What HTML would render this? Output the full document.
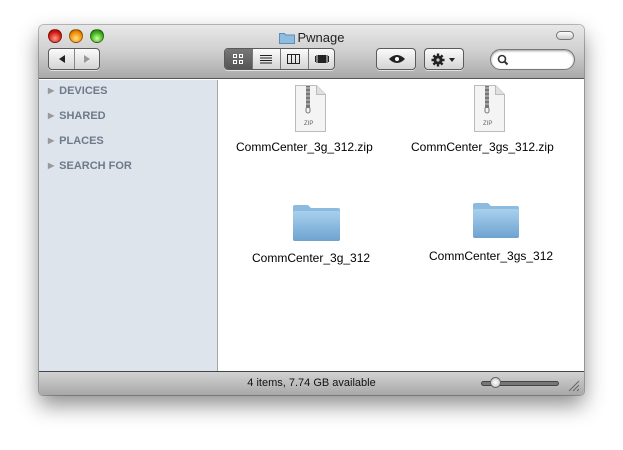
<!DOCTYPE html>
<html><head><style>
*{margin:0;padding:0;box-sizing:border-box}
body{width:623px;height:450px;background:#fff;position:relative;overflow:hidden;font-family:"Liberation Sans",sans-serif}
.win{position:absolute;left:39px;top:25px;width:545px;height:370px;border-radius:5px 5px 4px 4px;box-shadow:0 10px 22px rgba(0,0,0,.45),0 0 0 1px rgba(0,0,0,.25);overflow:hidden;background:#fff}
.tb{position:absolute;left:0;top:0;width:545px;height:54px;background:linear-gradient(#e8e8e8,#cfcfcf 50%,#a9a9a9);border-bottom:1px solid #555}
.light{position:absolute;top:4px;width:14px;height:14px;border-radius:50%;border:1px solid rgba(0,0,0,.35)}
.title{position:absolute;top:5px;left:0;width:545px;text-align:center;font-size:13px;color:#222}
.btn{position:absolute;top:23px;height:22px;border:1px solid #5a5a5a;border-radius:4px;background:linear-gradient(#fbfbfb,#d4d4d4);box-shadow:0 1px 0 rgba(255,255,255,.6)}
.side{position:absolute;left:0;top:55px;width:179px;height:291px;background:#dde4ec;border-right:1px solid #a5a5a5}
.side div{position:absolute;left:9px;font-size:11px;font-weight:bold;color:#6e7a89}
.side span{color:#999;font-size:8px;margin-right:5px;vertical-align:1px}
.bot{position:absolute;left:0;top:346px;width:545px;height:24px;background:linear-gradient(#d2d2d2,#a8a8a8);border-top:1px solid #444;font-size:11px;color:#111;text-align:center;line-height:22px}
.lbl{position:absolute;font-size:12px;color:#000;white-space:nowrap}
</style></head><body>
<div class="win">
 <div class="tb">
  <div class="light" style="left:9px;background:radial-gradient(circle at 50% 70%,#ff9a8a,#d21a10 60%,#8a0a05)"></div>
  <div class="light" style="left:30px;background:radial-gradient(circle at 50% 70%,#ffe08a,#f08b00 60%,#a05500)"></div>
  <div class="light" style="left:51px;background:radial-gradient(circle at 50% 70%,#cfffa0,#3aae1a 60%,#1e6a08)"></div>
  <div class="title"><svg width="16" height="13" style="vertical-align:-2px;margin-right:3px" viewBox="0 0 16 13"><path d="M0.5 2.5h5l1 1.5h9v8.5h-15z" fill="#8fbde0" stroke="#5a8fba"/></svg>Pwnage</div>
  <div style="position:absolute;right:10px;top:6px;width:18px;height:9px;border:1px solid #777;border-radius:5px;background:linear-gradient(#fff,#ccc)"></div>
  <div class="btn" style="left:9px;width:52px"><div style="position:absolute;left:25px;top:0;width:1px;height:20px;background:#888"></div>
   <svg style="position:absolute;left:8px;top:5px" width="10" height="10"><path d="M8 1L2 5 8 9z" fill="#222"/></svg>
   <svg style="position:absolute;left:33px;top:5px" width="10" height="10"><path d="M2 1L8 5 2 9z" fill="#999"/></svg></div>
  <div class="btn" style="left:185px;width:111px;overflow:hidden;background:linear-gradient(#fbfbfb,#d4d4d4)">
   <div style="position:absolute;left:0;top:0;width:27px;height:20px;background:linear-gradient(#777,#555)"></div>
   <svg style="position:absolute;left:8px;top:5px" width="10" height="10"><g fill="none" stroke="#fff"><rect x=".5" y=".5" width="3" height="3"/><rect x="6.5" y=".5" width="3" height="3"/><rect x=".5" y="6.5" width="3" height="3"/><rect x="6.5" y="6.5" width="3" height="3"/></g></svg>
   <div style="position:absolute;left:27px;top:0;width:1px;height:20px;background:#777"></div>
   <svg style="position:absolute;left:35px;top:5px" width="12" height="10"><path d="M0 1.5h12M0 4h12M0 6.5h12M0 9h12" stroke="#222"/></svg>
   <div style="position:absolute;left:55px;top:0;width:1px;height:20px;background:#777"></div>
   <svg style="position:absolute;left:62px;top:5px" width="14" height="10"><rect x=".5" y=".5" width="12" height="9" fill="none" stroke="#222"/><path d="M4.5 0v10M8.5 0v10" stroke="#222"/></svg>
   <div style="position:absolute;left:83px;top:0;width:1px;height:20px;background:#777"></div>
   <svg style="position:absolute;left:89px;top:5px" width="16" height="10"><rect x="4" y="1" width="8" height="8" fill="#222"/><path d="M1.5 2v6M14.5 2v6M3 1v8M13 1v8" stroke="#222"/></svg>
  </div>
  <div class="btn" style="left:337px;width:40px"><svg style="position:absolute;left:11px;top:5px" width="18" height="10"><path d="M1 5Q9 -3 17 5Q9 13 1 5z" fill="#222"/><circle cx="9" cy="5" r="2" fill="#fff"/></svg></div>
  <div class="btn" style="left:385px;width:40px"><svg style="position:absolute;left:6px;top:4px" width="26" height="14"><g fill="#222" transform="translate(7,7)"><circle r="4.5"/><g stroke="#222" stroke-width="2.4"><path d="M0-6.5V6.5M-6.5 0H6.5M-4.6-4.6L4.6 4.6M-4.6 4.6L4.6-4.6"/></g><circle r="1.6" fill="#ccc"/></g><path d="M18 5h6l-3 4z" fill="#222"/></svg></div>
  <div style="position:absolute;left:451px;top:24px;width:85px;height:21px;border-radius:11px;background:#fff;border:1px solid #777;box-shadow:inset 0 1px 2px rgba(0,0,0,.4)"><svg style="position:absolute;left:6px;top:4px" width="12" height="12"><circle cx="5" cy="5" r="3.5" fill="none" stroke="#333" stroke-width="1.6"/><path d="M7.5 7.5l3 3" stroke="#333" stroke-width="2"/></svg></div>
 </div>
 <div class="side">
  <div style="top:5px"><span>▶</span>DEVICES</div>
  <div style="top:30px"><span>▶</span>SHARED</div>
  <div style="top:55px"><span>▶</span>PLACES</div>
  <div style="top:80px"><span>▶</span>SEARCH FOR</div>
 </div>
 <svg style="position:absolute;left:253px;top:60px" width="36" height="48"><path d="M3.5 .5h21l9 9v37h-30z" fill="#f4f4f4" stroke="#bbb"/><path d="M24.5.5v9h9" fill="#e0e0e0" stroke="#bbb"/><rect x="14" y="1" width="4" height="22" fill="#777"/><path d="M14 3h4M14 7h4M14 11h4M14 15h4M14 19h4" stroke="#ccc"/><rect x="14" y="22" width="4" height="6" rx="2" fill="none" stroke="#777"/><text x="12" y="40" font-size="6" fill="#666" font-family="Liberation Sans">ZIP</text></svg>
 <svg style="position:absolute;left:432px;top:60px" width="36" height="48"><path d="M3.5 .5h21l9 9v37h-30z" fill="#f4f4f4" stroke="#bbb"/><path d="M24.5.5v9h9" fill="#e0e0e0" stroke="#bbb"/><rect x="14" y="1" width="4" height="22" fill="#777"/><path d="M14 3h4M14 7h4M14 11h4M14 15h4M14 19h4" stroke="#ccc"/><rect x="14" y="22" width="4" height="6" rx="2" fill="none" stroke="#777"/><text x="12" y="40" font-size="6" fill="#666" font-family="Liberation Sans">ZIP</text></svg>
 <div class="lbl" style="left:197px;top:115px">CommCenter_3g_312.zip</div>
 <div class="lbl" style="left:372px;top:115px">CommCenter_3gs_312.zip</div>
 <svg style="position:absolute;left:253px;top:179px" width="49" height="38"><defs><linearGradient id="f" x1="0" y1="0" x2="0" y2="1"><stop offset="0" stop-color="#a8d0ee"/><stop offset="1" stop-color="#6ea3cf"/></linearGradient></defs><path d="M1 3q0-2 2-2h13l3 3h27q2 0 2 2v29q0 2-2 2h-43q-2 0-2-2z" fill="#8dbbe0"/><path d="M1 9q0-2 2-2h43q2 0 2 2v26q0 2-2 2h-43q-2 0-2-2z" fill="url(#f)"/></svg>
 <svg style="position:absolute;left:433px;top:177px" width="48" height="37"><path d="M1 3q0-2 2-2h13l3 3h26q2 0 2 2v28q0 2-2 2h-42q-2 0-2-2z" fill="#8dbbe0"/><path d="M1 9q0-2 2-2h42q2 0 2 2v25q0 2-2 2h-42q-2 0-2-2z" fill="url(#f)"/></svg>
 <div class="lbl" style="left:213px;top:226px">CommCenter_3g_312</div>
 <div class="lbl" style="left:390px;top:224px">CommCenter_3gs_312</div>
 <div class="bot">4 items, 7.74 GB available
  <div style="position:absolute;left:442px;top:9px;width:78px;height:5px;border-radius:3px;background:#777;border:1px solid #444"></div>
  <div style="position:absolute;left:451px;top:5px;width:11px;height:11px;border-radius:50%;background:radial-gradient(#fff,#bbb);border:1px solid #666"></div>
  <svg style="position:absolute;left:529px;top:8px" width="12" height="12"><path d="M11 1L1 11M11 5L5 11M11 9L9 11" stroke="#666"/></svg>
 </div>
</div>
</body></html>
